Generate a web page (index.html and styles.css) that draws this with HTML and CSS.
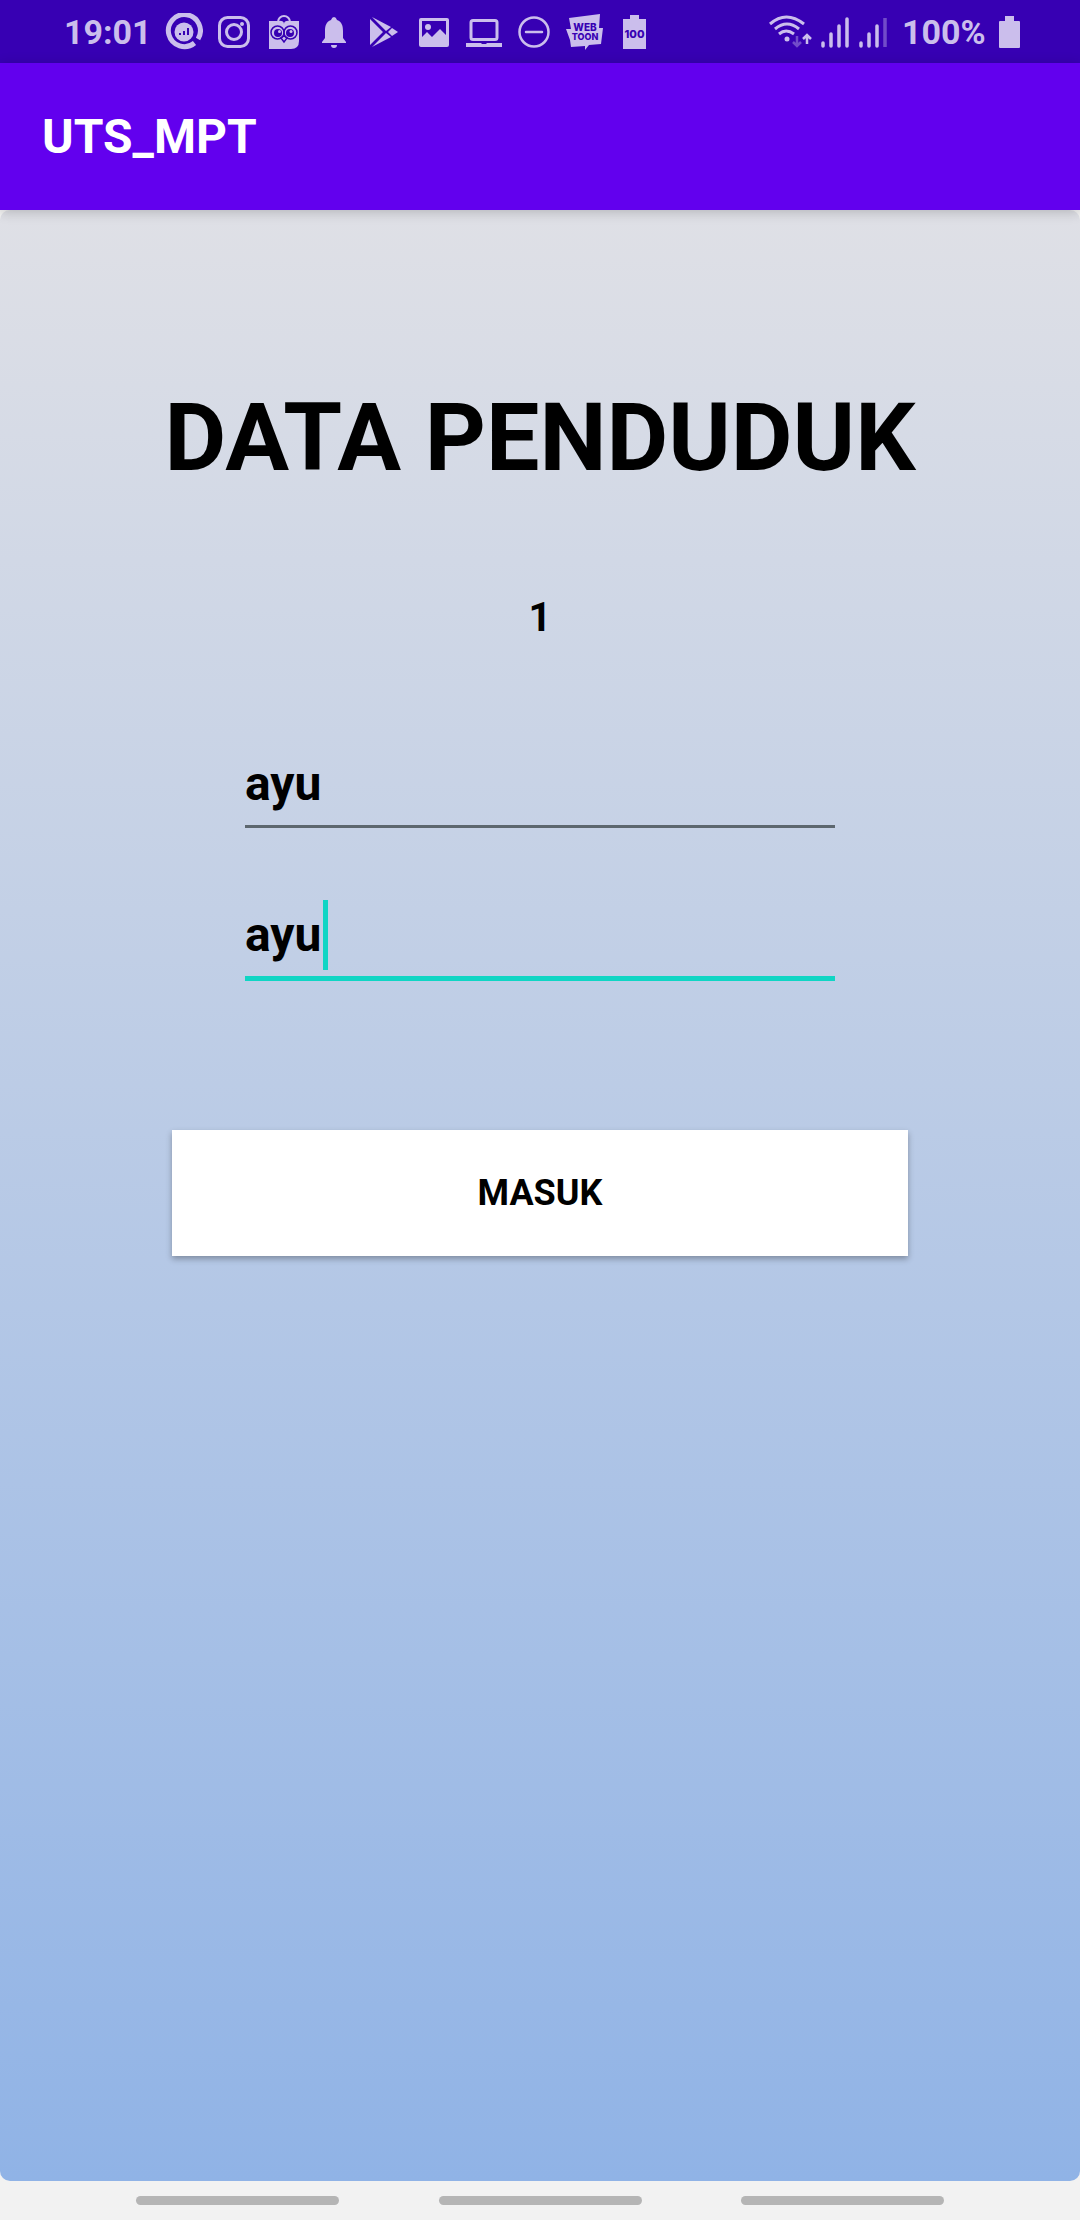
FILE: index.html
```html
<!DOCTYPE html>
<html lang="id">
<head>
<meta charset="utf-8">
<meta name="viewport" content="width=device-width, initial-scale=1">
<title>UTS_MPT</title>
<link rel="stylesheet" href="styles.css">
</head>
<body>
<div class="status-bar">
  <div class="status-group notifications">
    <span class="status-text">19:01</span>
    <svg class="icon" viewBox="0 0 38 38"><path d="M29.5 30A16 16 0 1 1 33 26" fill="none" stroke="currentColor" stroke-width="5"/><circle cx="19" cy="19" r="9.500" fill="currentColor"/><path d="M15 20v2M19 18v4M23 15v7" stroke="#3700b3" stroke-width="2"/></svg>
    <svg class="icon" viewBox="0 0 38 38"><rect x="4.500" y="4.500" width="29" height="29" rx="8" fill="none" stroke="currentColor" stroke-width="3"/><circle cx="19" cy="19" r="7.500" fill="none" stroke="currentColor" stroke-width="3"/><circle cx="27" cy="11" r="2" fill="currentColor"/></svg>
    <svg class="icon" viewBox="0 0 38 38"><path d="M13 9a6 6 0 0 1 12 0" fill="none" stroke="currentColor" stroke-width="2"/><path d="M4 8h8q7-1 7 3 0-4 7-3h8v20q0 8-8 8H4z" fill="currentColor"/><g fill="none" stroke="#3700b3" stroke-width="1.500"><circle cx="12.500" cy="19.500" r="6.500"/><circle cx="25.500" cy="19.500" r="6.500"/><path d="M16 25l3 4 3-4-3-2z"/></g><circle cx="13" cy="20" r="4" fill="#3700b3"/><circle cx="25" cy="20" r="4" fill="#3700b3"/><circle cx="14.500" cy="18.500" r="1.500" fill="currentColor"/><circle cx="26" cy="18.500" r="1.500" fill="currentColor"/></svg>
    <svg class="icon" viewBox="0 0 38 38"><path d="M19 4q2 0 3 3c5 2 6 6 6 11v7l3 4v1H7v-1l3-4v-7c0-5 1-9 6-11q1-3 3-3zM16 32h6q0 3-3 3t-3-3z" fill="currentColor"/></svg>
    <svg class="icon" viewBox="0 0 38 38"><path d="M5 6l13 13L5 32zM7 4l19 10-5 4zM27 15l6 4-6 4-4-4zM21 20l5 4L7 34z" fill="currentColor"/></svg>
    <svg class="icon" viewBox="0 0 38 38"><path d="M6 5h26q2 0 2 2v25q0 2-2 2H6q-2 0-2-2V7q0-2 2-2zm1 18v1l5-5 5 5 8-8 6 6V8H7z" fill="currentColor" fill-rule="evenodd"/><circle cx="13" cy="14" r="3" fill="currentColor"/></svg>
    <svg class="icon" viewBox="0 0 38 38"><rect x="6" y="7.500" width="26" height="19" rx="2" fill="none" stroke="currentColor" stroke-width="3"/><path d="M1 30h15l1 1h4l1-1h15v4H1z" fill="currentColor"/></svg>
    <svg class="icon" viewBox="0 0 38 38"><circle cx="19" cy="19" r="14.500" fill="none" stroke="currentColor" stroke-width="2.500"/><path d="M11 19h16" stroke="currentColor" stroke-width="2.500" stroke-linecap="round"/></svg>
    <svg class="icon" viewBox="0 0 38 38"><path d="M4 5l31-4-1 14h4l-2 16-12 1-4 5v-4L6 34 5 27 1 16h5z" fill="currentColor"/><g class="badge-text"><text x="20" y="17.500" font-size="10" text-anchor="middle">WEB</text><text x="20" y="26.500" font-size="9" text-anchor="middle">TOON</text></g></svg>
    <svg class="icon" viewBox="0 0 38 38"><path d="M15 2h9v4h7v30H8V6h7z" fill="currentColor"/><g class="badge-text"><text x="19.500" y="25" font-size="11" text-anchor="middle">100</text></g></svg>
  </div>
  <div class="status-group system">
    <svg class="wifi" viewBox="0 0 44 38"><g fill="none" stroke="currentColor" stroke-width="3"><path d="M2 11q16-14 34 0M7 16q12-10 24 0M11 21q7-6 15 0"/><path d="M39 31V22M35 26l4-4 4 4" stroke-width="2.500"/><path d="M29 23v9M25 29l4 4 4-4" stroke-width="2.500" opacity=".4"/></g><circle cx="19" cy="26" r="2.500" fill="currentColor"/></svg>
    <svg class="signal" viewBox="0 0 30 38"><path d="M3 30v3M11 21v12M19 13v20M27 6v27" stroke="currentColor" stroke-width="3.500" stroke-linecap="round"/></svg>
    <svg class="signal" viewBox="0 0 30 38"><path d="M3 30v3M11 21v12M19 13v20" stroke="currentColor" stroke-width="3.500" stroke-linecap="round"/><path d="M27 5v29" stroke="currentColor" stroke-width="3.500" opacity=".4"/></svg>
    <span class="status-text percent">100%</span>
    <svg class="battery" viewBox="0 0 22 38"><path d="M7 3h9v5h5q1 0 1 1v25q0 1-1 1H2q-1 0-1-1V9q0-1 1-1h5z" fill="currentColor"/></svg>
  </div>
</div>
<header class="app-bar"><h1 class="app-title">UTS_MPT</h1></header>
<main class="screen">
  <form class="form">
    <h2 class="heading">DATA PENDUDUK</h2>
    <p class="count">1</p>
    <div class="field">
      <input class="field-input" type="text" value="ayu" aria-label="Nama pengguna">
    </div>
    <div class="field">
      <input class="field-input active" type="text" value="ayu" aria-label="Kata sandi">
      <span class="caret"></span>
    </div>
    <button class="submit" type="button">MASUK</button>
  </form>
</main>
<nav class="nav-bar" aria-label="Navigasi">
  <span class="nav-pill"></span><span class="nav-pill"></span><span class="nav-pill"></span>
</nav>
</body>
</html>
```
FILE: styles.css
```css
* { box-sizing: border-box; }

body {
  margin: 0;
  min-height: 100vh;
  display: flex;
  flex-direction: column;
  background: #f2f2f2;
  color: #000;
  font-family: Roboto, "Liberation Sans", sans-serif;
  font-weight: 700;
}

h1, h2, p { margin: 0; }

.status-bar {
  height: 63px;
  padding: 0 60px 0 64px;
  display: flex;
  align-items: center;
  justify-content: space-between;
  background: #3700b3;
  color: #cbbeec;
}

.status-group { display: flex; align-items: center; }
.notifications { gap: 12px; }
.system { gap: 8px; }
.status-text { font-size: 34px; line-height: 48px; }
.notifications .status-text { width: 89px; }
.percent { width: 88px; margin-left: 6px; }
.icon { width: 38px; height: 38px; }
.wifi { width: 44px; height: 38px; }
.signal { width: 30px; height: 38px; }
.battery { width: 22px; height: 38px; }

.badge-text {
  fill: #3700b3;
  font-family: Inter, sans-serif;
  font-weight: 800;
}

.app-bar {
  position: relative;
  height: 147px;
  padding: 0 42px;
  display: flex;
  align-items: center;
  background: #6200ee;
  color: #fff;
  box-shadow: 0 2px 12px rgba(0, 0, 0, 0.2);
}

.app-title { font-size: 48px; line-height: 64px; }

.screen {
  flex: 1;
  padding: 168px 24px 48px;
  border-radius: 10px;
  background: linear-gradient(#dfe0e6, #90b3e6);
}

.form {
  display: flex;
  flex-direction: column;
  align-items: center;
}

.heading { font-size: 95px; line-height: 120px; text-align: center; }
.count { margin: 96px 0 106px; font-size: 40px; line-height: 48px; }

.field {
  position: relative;
  width: 100%;
  max-width: 590px;
  margin-bottom: 71px;
}

.field-input {
  display: block;
  width: 100%;
  height: 80px;
  padding: 0 0 7px;
  border: 0;
  border-bottom: 3px solid #5d676f;
  border-radius: 0;
  outline: 0;
  background: transparent;
  color: #000;
  font: inherit;
  font-size: 48px;
}

.field-input.active {
  height: 82px;
  border-bottom: 5px solid #10d5c4;
}

.caret {
  position: absolute;
  top: 1px;
  left: 78px;
  width: 5px;
  height: 70px;
  background: #10d5c4;
}

.submit {
  width: 100%;
  max-width: 736px;
  height: 126px;
  margin-top: 78px;
  border: 0;
  background: #fff;
  color: #000;
  font: inherit;
  font-size: 36px;
  box-shadow: 0 3px 6px rgba(0, 0, 0, 0.3);
}

.nav-bar {
  height: 39px;
  display: flex;
  align-items: center;
  justify-content: center;
  gap: 9.2%;
}

.nav-pill {
  width: 203px;
  height: 9px;
  border-radius: 5px;
  background: #b5b5b5;
}
```
